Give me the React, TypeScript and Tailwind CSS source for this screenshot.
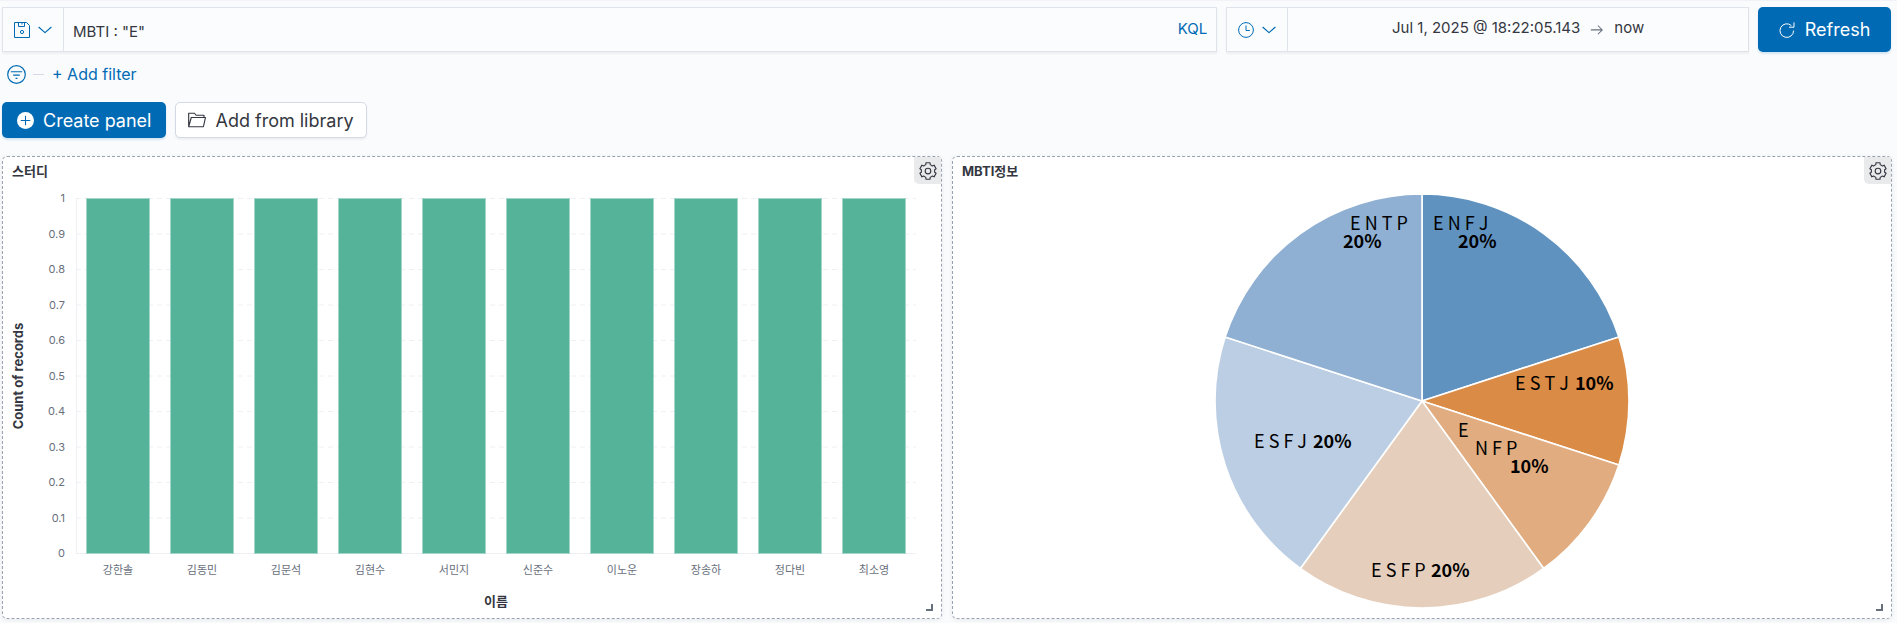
import type { ReactNode } from 'react'

const names = ['강한솔', '김동민', '김문석', '김현수', '서민지', '신준수', '이노운', '장송하', '정다빈', '최소영']
const ticks = ['1', '0.9', '0.8', '0.7', '0.6', '0.5', '0.4', '0.3', '0.2', '0.1', '0']

const slices = [
  { share: 20, color: '#6092c0' },
  { share: 10, color: '#da8b45' },
  { share: 10, color: '#e1ac7f' },
  { share: 20, color: '#e5cfbc' },
  { share: 20, color: '#bccee3' },
  { share: 20, color: '#8fb0d2' },
]

const pieLabels = [
  { x: 397, y: 46, text: 'E N T P' },
  { x: 390, y: 64, text: '20%', bold: true },
  { x: 480, y: 46, text: 'E N F J' },
  { x: 505, y: 64, text: '20%', bold: true },
  { x: 562, y: 206, text: 'E S T J' },
  { x: 622, y: 206, text: '10%', bold: true },
  { x: 505, y: 253, text: 'E' },
  { x: 522, y: 271, text: 'N F P' },
  { x: 557, y: 289, text: '10%', bold: true },
  { x: 301, y: 264, text: 'E S F J' },
  { x: 360, y: 264, text: '20%', bold: true },
  { x: 418, y: 393, text: 'E S F P' },
  { x: 478, y: 393, text: '20%', bold: true },
]

const gearPath =
  'M' +
  [0, 60, 120, 180, 240, 300]
    .flatMap((base) => [
      [base - 14, 7.5],
      [base + 14, 7.5],
      [base + 19, 6],
      [base + 41, 6],
    ])
    .map(([deg, r]) => {
      const a = (deg * Math.PI) / 180
      return `${(8 + r * Math.sin(a)).toFixed(2)} ${(8 - r * Math.cos(a)).toFixed(2)}`
    })
    .join('L') +
  'Z'

function Icon({ className, children }: { className: string; children: ReactNode }) {
  return (
    <svg viewBox="0 0 16 16" className={className} fill="none" stroke="currentColor" aria-hidden="true">
      {children}
    </svg>
  )
}

function Chevron() {
  return (
    <Icon className="size-4">
      <path d="M1.6 5l6.4 5.6L14.4 5" strokeWidth="1.2" strokeLinejoin="round" />
    </Icon>
  )
}

function Panel({ title, children }: { title: string; children: ReactNode }) {
  return (
    <section className="relative min-w-0 flex-1 rounded-[5px] border border-dashed border-[#98a2b3] bg-white shadow-[0_1px_4px_rgba(0,0,0,0.08)]">
      <header className="flex h-[27px] items-start justify-between">
        <h2 className="px-[9px] py-1 text-[13px] leading-[20px] font-bold">{title}</h2>
        <button type="button" aria-label="Panel options" className="flex size-[27px] items-center justify-center rounded-bl-[5px] bg-[#e9eaec] text-[#343741]">
          <Icon className="size-[18px]">
            <path d={gearPath} strokeLinejoin="round" />
            <circle cx="8" cy="8" r="2.5" />
          </Icon>
        </button>
      </header>
      {children}
      <span className="absolute right-2 bottom-[7px] size-[7px] border-r-2 border-b-2 border-[#69707d]" />
    </section>
  )
}

function BarChart() {
  return (
    <svg viewBox="0 0 938 434" className="block w-full" role="img" aria-label="Count of records by 이름">
      {ticks.map((t, i) => (
        <g key={t}>
          <line x1="73" x2="913" y1={14.5 + i * 35.5} y2={14.5 + i * 35.5} stroke="#eef0f3" strokeDasharray={i === 10 ? undefined : '5 4'} />
          <text x="62" y={18 + i * 35.5} textAnchor="end" className="fill-[#69707d] text-[11px]">{t}</text>
        </g>
      ))}
      <line x1="73.5" x2="73.5" y1="14" y2="370" stroke="#eef0f3" />
      {names.map((n, i) => (
        <g key={n}>
          <rect x={83.5 + i * 84} y="14.5" width="63" height="355" fill="#54b399" stroke="#a3d6c8" />
          <text x={115 + i * 84} y="390" textAnchor="middle" className="fill-[#69707d] text-[11px]">{n}</text>
        </g>
      ))}
      <text transform="translate(20 192) rotate(-90)" textAnchor="middle" className="fill-[#343741] text-[13px] font-bold">Count of records</text>
      <text x="493" y="422" textAnchor="middle" className="fill-[#343741] text-[13px] font-bold">이름</text>
    </svg>
  )
}

function PieChart() {
  const cx = 469
  const cy = 217
  const r = 207
  let total = 0
  const point = (share: number) => {
    const a = (share / 100) * 2 * Math.PI
    return `${cx + r * Math.sin(a)} ${cy - r * Math.cos(a)}`
  }
  return (
    <svg viewBox="0 0 938 434" className="block w-full" role="img" aria-label="MBTI share">
      {slices.map((s) => {
        const from = total
        total += s.share
        return (
          <path key={from} d={`M${cx} ${cy}L${point(from)}A${r} ${r} 0 0 1 ${point(total)}Z`} fill={s.color} stroke="#fff" strokeWidth="1.6" strokeLinejoin="round" />
        )
      })}
      {pieLabels.map((l) => (
        <text key={`${l.x}-${l.y}`} x={l.x} y={l.y} className={l.bold ? "font-['Noto_Sans_CJK_KR',sans-serif] text-[18px] font-bold" : "font-['Noto_Sans_CJK_KR',sans-serif] text-[18px]"}>
          {l.text}
        </text>
      ))}
    </svg>
  )
}

export default function App() {
  return (
    <main className="min-h-screen border-t border-[#f1f3f7] bg-[#fafbfd] pr-[5px] pb-1 pl-0.5 font-[Inter,'Noto_Sans_CJK_KR',sans-serif] text-[#343741]">
      <div className="flex items-stretch gap-[9px] pt-1.5 pr-px">
        <div className="flex h-[45px] flex-[1216] border border-[#dfe3ec] bg-[#fbfcfd] shadow-[0_2px_2px_rgba(0,0,0,0.05)]">
          <button type="button" aria-label="Saved queries" className="flex w-[61px] shrink-0 items-center justify-center gap-[7px] border-r border-[#dfe3ec] text-[#006bb4]">
            <Icon className="size-4">
              <path d="M.5.5h12l3 3v12H.5z" strokeLinejoin="round" />
              <path d="M4.5.5v4h6v-4M8 .5v2" />
              <circle cx="8" cy="10" r="1.6" />
            </Icon>
            <Chevron />
          </button>
          <input type="text" aria-label="Search" defaultValue={'MBTI : "E"'} className="min-w-0 flex-1 bg-transparent px-[9px] pt-1.5 text-[15px] outline-none" />
          <button type="button" className="px-[9px] text-[15px] text-[#006bb4]">KQL</button>
        </div>
        <div className="flex h-[45px] flex-[522] border border-[#dfe3ec] bg-[#fbfcfd] shadow-[0_2px_2px_rgba(0,0,0,0.05)]">
          <button type="button" aria-label="Quick select" className="flex w-[61px] shrink-0 items-center justify-center gap-[7px] border-r border-[#dfe3ec] text-[#006bb4]">
            <Icon className="size-4">
              <circle cx="8" cy="8" r="7.4" />
              <path d="M8 3.5V8.5h3.8" />
            </Icon>
            <Chevron />
          </button>
          <div className="flex flex-1 items-center justify-center gap-[10px] pb-0.5 text-[15px]">
            <button type="button">Jul 1, 2025 @ 18:22:05.143</button>
            <Icon className="size-3.5 text-[#69707d]">
              <path d="M1 9h13M9 4l5 5-5 5" strokeWidth="1.2" />
            </Icon>
            <button type="button">now</button>
          </div>
        </div>
        <button type="button" className="flex h-[45px] w-[133px] shrink-0 items-center justify-center gap-[10px] rounded-[5px] bg-[#006bb4] text-[18px] text-white shadow-[0_2px_2px_rgba(0,107,180,0.15)]">
          <Icon className="size-4">
            <path d="M14.6 8.6A6.8 6.8 0 1 1 12.4 3.6" />
            <path d="M10 5.2h5V.4" />
          </Icon>
          Refresh
        </button>
      </div>

      <div className="mt-[7px] flex h-[30px] items-center pl-[5px] text-[16px] text-[#006bb4]">
        <button type="button" aria-label="Filter options">
          <Icon className="size-[19px]">
            <circle cx="8" cy="8" r="7.4" />
            <path d="M3.2 5.7h9.6M5.2 8.5h5.6M7.2 11.3h1.6" />
          </Icon>
        </button>
        <span className="ml-[7px] h-px w-[11px] bg-[#d3dae6]" />
        <button type="button" className="ml-2">+ Add filter</button>
      </div>

      <div className="mt-[13px] flex gap-[9px]">
        <button type="button" className="flex h-9 items-center gap-[9px] rounded-[5px] bg-[#006bb4] px-[15px] text-[18px] text-white shadow-[0_2px_2px_rgba(0,107,180,0.15)]">
          <Icon className="size-[17px]">
            <circle cx="8" cy="8" r="8" fill="currentColor" stroke="none" />
            <path d="M8 3.5v9M3.5 8h9" stroke="#006bb4" />
          </Icon>
          Create panel
        </button>
        <button type="button" className="flex h-9 items-center gap-[9px] rounded-[5px] border border-[#d3dae6] bg-white px-3 text-[18px] shadow-[0_2px_2px_rgba(0,0,0,0.05)]">
          <Icon className="size-[18px]">
            <path d="M.6 14V2h5.2l1.4 1.8h7v2M.6 14l2.3-8.2h12.6L13.7 14z" strokeLinejoin="round" />
          </Icon>
          Add from library
        </button>
      </div>

      <div className="mt-[18px] flex gap-[10px]">
        <Panel title="스터디"><BarChart /></Panel>
        <Panel title="MBTI정보"><PieChart /></Panel>
      </div>
    </main>
  )
}
